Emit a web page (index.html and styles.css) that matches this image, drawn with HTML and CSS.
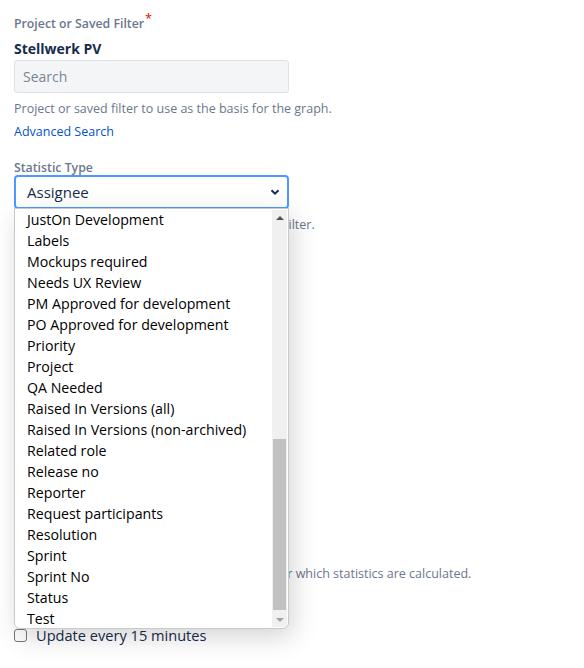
FILE: index.html
```html
<!DOCTYPE html>
<html>
<head>
<meta charset="utf-8">
<link rel="stylesheet" href="styles.css">
</head>
<body>
<form class="form">
  <div class="field">
    <label class="label">Project or Saved Filter<span class="req">*</span></label>
    <div class="selected">Stellwerk PV</div>
    <div class="input">Search</div>
    <div class="help">Project or saved filter to use as the basis for the graph.</div>
    <a class="link" href="#">Advanced Search</a>
  </div>

  <div class="field field-stat">
    <label class="label">Statistic Type</label>
    <div class="select-wrap">
      <div class="select">
        <span>Assignee</span>
        <svg class="chev" width="12" height="12" viewBox="0 0 12 12"><path d="M2.5 4.2 L6 7.7 L9.5 4.2" fill="none" stroke="#172b4d" stroke-width="2"/></svg>
      </div>
      <div class="popup">
        <ul class="options">
          <li>JustOn Development</li>
          <li>Labels</li>
          <li>Mockups required</li>
          <li>Needs UX Review</li>
          <li>PM Approved for development</li>
          <li>PO Approved for development</li>
          <li>Priority</li>
          <li>Project</li>
          <li>QA Needed</li>
          <li>Raised In Versions (all)</li>
          <li>Raised In Versions (non-archived)</li>
          <li>Related role</li>
          <li>Release no</li>
          <li>Reporter</li>
          <li>Request participants</li>
          <li>Resolution</li>
          <li>Sprint</li>
          <li>Sprint No</li>
          <li>Status</li>
          <li>Test</li>
        </ul>
        <div class="scrollbar">
          <div class="arrow up"></div>
          <div class="track"><div class="thumb"></div></div>
          <div class="arrow down"></div>
        </div>
      </div>
    </div>
    <div class="help">Select which type of statistic to display for this filter.</div>
  </div>

  <div class="field hidden-field">
    <label class="label">Sort By</label>
    <div class="input"></div>
  </div>
  <div class="field hidden-field">
    <label class="label">Sort Direction</label>
    <div class="input"></div>
  </div>
  <div class="field hidden-field">
    <label class="label">Show Resolved Issue Statistics</label>
    <div class="input"></div>
  </div>
  <div class="field field-period">
    <label class="label">Period</label>
    <div class="input"></div>
    <div class="help">The period of time by which data is divided over which statistics are calculated.</div>
  </div>

  <div class="field field-refresh">
    <label class="label">Auto refresh</label>
    <label class="check"><span class="box"></span>Update every 15 minutes</label>
  </div>
</form>
</body>
</html>
```

FILE: styles.css
```css
html, body {
  margin: 0;
  padding: 0;
  background: #ffffff;
  min-height: 100%;
}
html {
  height: 100%;
}
body {
  font-family: "Open Sans", "Noto Sans", sans-serif;
  color: #172b4d;
  min-height: 668px;
}
.form {
  padding: 16px 0 0 14px;
  width: 275px;
  display: flex;
  flex-direction: column;
}
.field {
  display: flex;
  flex-direction: column;
}
.label {
  font-size: 12.3px;
  font-weight: 600;
  color: #6b778c;
  line-height: 16px;
  height: 16px;
}
.req {
  color: #de350b;
  font-size: 12px;
  position: relative;
  top: -5px;
  margin-left: 1px;
}
.selected {
  font-size: 14px;
  font-weight: 700;
  color: #172b4d;
  line-height: 20px;
  margin-top: 7px;
}
.input {
  box-sizing: border-box;
  height: 33px;
  background: #f4f5f7;
  border: 1px solid #dfe1e6;
  border-radius: 3px;
  font-size: 14px;
  color: #7a869a;
  line-height: 31px;
  padding-left: 8px;
  margin-top: 1px;
}
.help {
  font-size: 12.5px;
  color: #6b778c;
  line-height: 18px;
  margin-top: 7px;
  white-space: nowrap;
}
.link {
  font-size: 12.5px;
  color: #0052cc;
  text-decoration: none;
  line-height: 18px;
  margin-top: 5px;
}
.field-stat {
  margin-top: 19px;
}
.select-wrap {
  position: relative;
  margin-top: -1px;
}
.select {
  box-sizing: border-box;
  height: 34px;
  border: 2px solid #4c9aff;
  border-radius: 4px;
  background: #ffffff;
  display: flex;
  align-items: center;
  justify-content: space-between;
  padding: 0 6px 0 11px;
  font-size: 15px;
  color: #172b4d;
}
.chev {
  display: block;
}
.popup {
  position: absolute;
  top: 33px;
  left: 0;
  width: 275px;
  height: 421px;
  box-sizing: border-box;
  background: #ffffff;
  border: 1px solid #c9c9c9;
  border-radius: 0 0 6px 6px;
  box-shadow: 4px 8px 26px rgba(0, 0, 0, 0.17);
  display: flex;
  overflow: hidden;
  z-index: 10;
}
.options {
  list-style: none;
  margin: 0;
  padding: 0;
  flex: 1;
}
.options li {
  font-size: 14.2px;
  line-height: 21px;
  height: 21px;
  padding-left: 12px;
  color: #000000;
  white-space: nowrap;
}
.scrollbar {
  width: 15px;
  background: #f0f0f0;
  display: flex;
  flex-direction: column;
  margin: 1px 1px 1px 0;
}
.arrow {
  height: 15px;
  display: flex;
  align-items: center;
  justify-content: center;
}
.arrow.up::before {
  content: "";
  border-left: 4px solid transparent;
  border-right: 4px solid transparent;
  border-bottom: 4px solid #505050;
}
.arrow.down::before {
  content: "";
  border-left: 4px solid transparent;
  border-right: 4px solid transparent;
  border-top: 4px solid #a3a3a3;
}
.track {
  flex: 1;
  display: flex;
  flex-direction: column;
  justify-content: flex-end;
}
.thumb {
  height: 171px;
  margin: 0 1px 2px;
  background: #c1c1c1;
}
.hidden-field {
  margin-top: 16px;
}
.field-period {
  margin-top: 76px;
}
.field-refresh {
  margin-top: 18px;
}
.check {
  display: flex;
  align-items: center;
  font-size: 14.6px;
  color: #172b4d;
  line-height: 20px;
  margin-top: 8px;
}
.box {
  box-sizing: border-box;
  width: 13px;
  height: 13px;
  border: 1px solid #767676;
  border-radius: 3px;
  background: #fff;
  margin: 0 9px 0 0;
}
```
